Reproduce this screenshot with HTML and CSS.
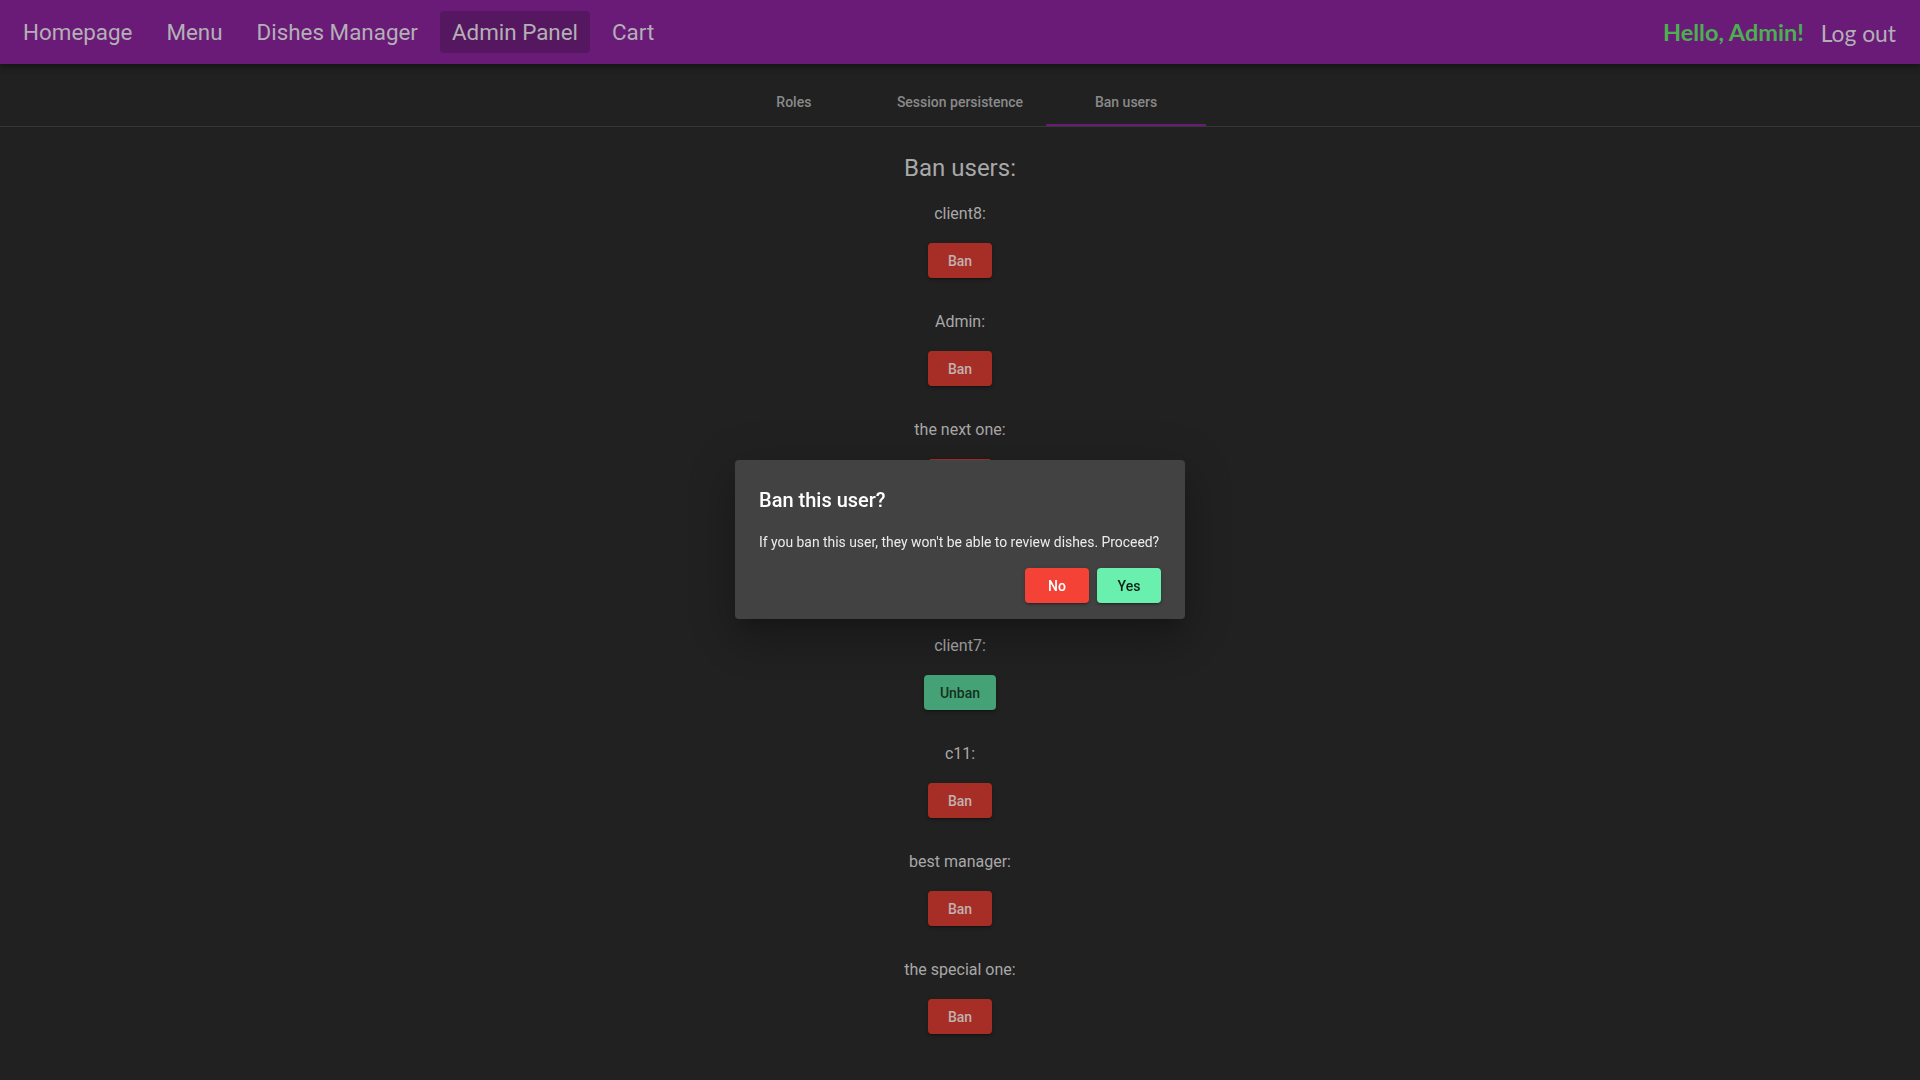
FILE: index.html
```html
<!DOCTYPE html>
<html lang="en">
<head>
<meta charset="utf-8">
<title>Admin Panel</title>
<link rel="stylesheet" href="styles.css">
</head>
<body>
<header class="navbar">
  <nav class="nav-links">
    <a class="nav-link">Homepage</a>
    <a class="nav-link">Menu</a>
    <a class="nav-link">Dishes Manager</a>
    <a class="nav-link active">Admin Panel</a>
    <a class="nav-link">Cart</a>
  </nav>
  <div class="nav-user">
    <span class="hello">Hello, Admin!</span>
    <a class="logout">Log out</a>
  </div>
</header>

<div class="tabs">
  <div class="tab tab-roles">Roles</div>
  <div class="tab tab-session">Session persistence</div>
  <div class="tab tab-ban active">Ban users</div>
</div>

<main class="content">
  <h2 class="title">Ban users:</h2>
  <div class="user-row"><p class="user-name">client8:</p><button class="btn btn-ban">Ban</button></div>
  <div class="user-row"><p class="user-name">Admin:</p><button class="btn btn-ban">Ban</button></div>
  <div class="user-row"><p class="user-name">the next one:</p><button class="btn btn-ban">Ban</button></div>
  <div class="user-row covered"><p class="user-name">client9:</p><button class="btn btn-ban">Ban</button></div>
  <div class="user-row"><p class="user-name">client7:</p><button class="btn btn-unban">Unban</button></div>
  <div class="user-row"><p class="user-name">c11:</p><button class="btn btn-ban">Ban</button></div>
  <div class="user-row"><p class="user-name">best manager:</p><button class="btn btn-ban">Ban</button></div>
  <div class="user-row"><p class="user-name">the special one:</p><button class="btn btn-ban">Ban</button></div>
</main>

<div class="dialog" role="dialog">
  <h3 class="dialog-title">Ban this user?</h3>
  <p class="dialog-text">If you ban this user, they won't be able to review dishes. Proceed?</p>
  <div class="dialog-actions">
    <button class="btn btn-no">No</button>
    <button class="btn btn-yes">Yes</button>
  </div>
</div>
</body>
</html>
```

FILE: styles.css
```css
* { box-sizing: border-box; }

html, body {
  margin: 0;
  padding: 0;
  background: #212121;
  font-family: Roboto, "Noto Sans", sans-serif;
  min-height: 100%;
}

.navbar {
  height: 64px;
  background: #6a1b78;
  display: flex;
  align-items: center;
  justify-content: space-between;
  padding: 0 24px 0 11px;
  box-shadow: 0 2px 4px -1px rgba(0,0,0,0.2), 0 4px 5px 0 rgba(0,0,0,0.14), 0 1px 10px 0 rgba(0,0,0,0.12);
  position: relative;
  z-index: 2;
}

.nav-links {
  display: flex;
  align-items: center;
  gap: 10px;
}

.nav-link {
  font-size: 22.4px;
  color: #b3b0b5;
  padding: 0 12px;
  height: 42px;
  line-height: 42px;
  border-radius: 4px;
  cursor: pointer;
}

.nav-link.active {
  background: #55175f;
}

.nav-user {
  display: flex;
  align-items: center;
  gap: 17px;
}

.hello {
  font-family: Lato, "Open Sans", sans-serif;
  font-weight: 700;
  font-size: 23.5px;
  color: #4caf50;
}

.logout {
  font-family: Lato, "Open Sans", sans-serif;
  font-size: 22.8px;
  color: #b3b0b5;
  position: relative;
  top: 1px;
  cursor: pointer;
}

.tabs {
  margin-top: 14px;
  height: 49px;
  display: flex;
  justify-content: center;
  border-bottom: 1px solid #373737;
}

.tab {
  min-width: 160px;
  padding: 2px 23px 0;
  height: 48px;
  display: flex;
  align-items: center;
  justify-content: center;
  font-size: 14px;
  font-weight: 500;
  color: #8a8a8a;
  border-bottom: 2px solid transparent;
}

.tab.active {
  border-bottom-color: #6a1b78;
}

.content {
  display: flex;
  flex-direction: column;
  align-items: center;
  padding-bottom: 40px;
}

.title {
  margin: 25px 0 18px;
  font-size: 24px;
  line-height: 32px;
  font-weight: 400;
  color: #a8a8a8;
}

.user-row {
  display: flex;
  flex-direction: column;
  align-items: center;
  margin-bottom: 32px;
}

.user-name {
  margin: 0 0 17px;
  font-size: 16px;
  line-height: 24px;
  color: #a8a8a8;
}

.btn {
  font-family: Roboto, "Noto Sans", sans-serif;
  font-size: 14px;
  font-weight: 500;
  min-width: 64px;
  height: 35px;
  padding: 0 16px;
  border: none;
  border-radius: 4px;
  cursor: pointer;
  box-shadow: 0 3px 1px -2px rgba(0,0,0,0.2), 0 2px 2px 0 rgba(0,0,0,0.14), 0 1px 5px 0 rgba(0,0,0,0.12);
}

.btn-ban {
  background: #a72e27;
  color: #bfb2b0;
}

.btn-unban {
  background: #45a276;
  color: #14301f;
  min-width: 72px;
}

.dialog {
  position: fixed;
  left: 735px;
  top: 460px;
  width: 450px;
  background: #424242;
  border-radius: 4px;
  padding: 24px 24px 16px;
  box-shadow: 0 11px 15px -7px rgba(0,0,0,0.2), 0 24px 38px 3px rgba(0,0,0,0.14), 0 9px 46px 8px rgba(0,0,0,0.12);
  z-index: 10;
}

.dialog-title {
  margin: 0 0 16px;
  font-size: 20px;
  line-height: 32px;
  font-weight: 500;
  color: #ffffff;
}

.dialog-text {
  margin: 0 0 16px;
  font-size: 13.9px;
  line-height: 20px;
  color: #ececec;
  white-space: nowrap;
}

.dialog-actions {
  display: flex;
  justify-content: flex-end;
  gap: 8px;
}

.btn-no {
  background: #f44336;
  color: #ffffff;
}

.btn-yes {
  background: #69f0ae;
  color: rgba(0,0,0,0.87);
}
```
